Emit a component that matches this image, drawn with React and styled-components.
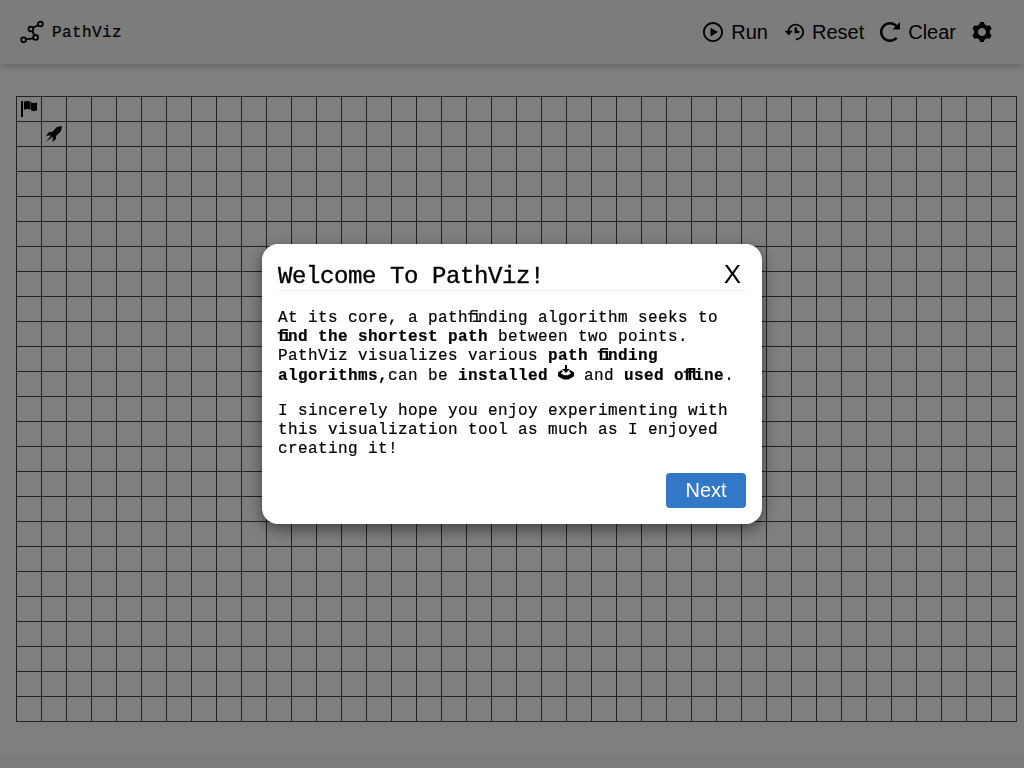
import React from 'react';
import styled, { createGlobalStyle } from 'styled-components';
import {
  ImCog, ImFlag, ImHistory, ImPlay2, ImRocket, ImSpinner11,
} from 'react-icons/im';

const GlobalStyle = createGlobalStyle`
  *, *::before, *::after { box-sizing: border-box; }
  body {
    margin: 0;
    background: #fff;
    color: #000;
    font: 16px/19px "Liberation Mono", monospace;
    letter-spacing: 0.4px;
    overflow: hidden;
  }
`;

const Page = styled.div`
  display: flex;
  flex-direction: column;
  height: 768px;
`;

const Header = styled.header`
  display: flex;
  align-items: center;
  justify-content: space-between;
  height: 64px;
  flex: none;
  padding: 0 32px 0 20px;
  background: #f8f8f8;
  box-shadow: 0 4px 6px -1px rgba(0, 0, 0, 0.2);
`;

const Brand = styled.div`
  display: flex;
  align-items: center;
  gap: 8px;
`;

const BrandName = styled.span`
  padding-top: 3px;
  -webkit-text-stroke: 0.2px #000;
`;

const Toolbar = styled.nav`
  display: flex;
  align-items: center;
`;

const ToolButton = styled.button`
  display: flex;
  align-items: center;
  gap: 8px;
  margin: 0 0 0 ${({ $before }) => $before || 0}px;
  padding: 0;
  border: 0;
  background: none;
  color: #000;
  font: 20px/24px "Liberation Sans", sans-serif;
`;

const Main = styled.main`
  flex: 1;
  padding: 32px 0 0 16px;
`;

const Board = styled.div`
  display: grid;
  grid-template-columns: repeat(40, 25px);
  grid-auto-rows: 25px;
  width: 1001px;
  border-top: 1px solid #444;
  border-left: 1px solid #444;
`;

const Cell = styled.div`
  display: flex;
  align-items: center;
  justify-content: center;
  border-right: 1px solid #444;
  border-bottom: 1px solid #444;
`;

const Footer = styled.footer`
  height: 14px;
  background: #f8f8f8;
`;

const Overlay = styled.div`
  position: fixed;
  inset: 0;
  display: flex;
  align-items: center;
  justify-content: center;
  background: rgba(0, 0, 0, 0.5);
`;

const Dialog = styled.section`
  display: flex;
  flex-direction: column;
  width: 500px;
  height: 280px;
  padding: 16px;
  border-radius: 16px;
  background: #fff;
  box-shadow: 0 5px 15px rgba(0, 0, 0, 0.5);
`;

const DialogHeader = styled.div`
  display: flex;
  align-items: center;
  justify-content: space-between;
  height: 31px;
  flex: none;
  border-bottom: 1px solid #f3f3f3;
`;

const Title = styled.h1`
  margin: 0;
  padding-top: 3px;
  font-size: 24px;
  line-height: 30px;
  font-weight: 400;
  letter-spacing: -0.4px;
  -webkit-text-stroke: 0.35px #000;
`;

const Close = styled.button`
  padding: 0 5px 2px 0;
  border: 0;
  background: none;
  color: #000;
  font: 26px/28px "Liberation Sans", sans-serif;
`;

const Copy = styled.p`
  margin: ${({ $top }) => $top}px 0 0;
  line-height: 19.2px;
  white-space: nowrap;
  -webkit-text-stroke: 0.2px #000;
`;

/* Fits a run of letters into a single 10px character cell. */
const Ligature = styled.span`
  display: inline-block;
  width: 10px;
  line-height: 1;
  letter-spacing: ${({ $tight }) => $tight}px;
  text-indent: -1px;
`;

const Next = styled.button`
  align-self: flex-end;
  width: 80px;
  height: 35px;
  margin-top: auto;
  padding: 0;
  border: 0;
  border-radius: 4px;
  background: #3178c6;
  color: #fff;
  font: 20px/35px "Liberation Sans", sans-serif;
`;

const InlineIcon = styled.svg`
  margin-top: -3px;
  vertical-align: -1px;
`;

const PathIcon = () => (
  <svg width="24" height="24" viewBox="0 0 24 24" fill="none" stroke="#000" strokeWidth="1.8">
    <circle cx="20.4" cy="4" r="2.4" />
    <circle cx="10.9" cy="9" r="2.4" />
    <circle cx="15.6" cy="17.4" r="2.4" />
    <circle cx="3.6" cy="19.8" r="2.4" />
    <path d="M13 7.8 18.2 5.1M12.1 11l2.4 4.3M6 19.4l7.2-1.1" />
  </svg>
);

const InstallIcon = () => (
  <InlineIcon width="16" height="16" viewBox="0 0 16 16">
    <path d="M7 0h2v4h3L8 8 4 4h3z" />
    <path fillRule="evenodd" d="M3.6 5 0 7.6v3.6L5.5 14.5h5l5.5-3.3V7.6L12.4 5 11 6.5l2.2 1.8L10 10.3H6L2.8 8.3 5 6.5z" />
  </InlineIcon>
);

const cells = Array.from({ length: 40 * 25 }, (_, i) => i);

export default function App() {
  return (
    <>
      <GlobalStyle />
      <Page>
        <Header>
          <Brand><PathIcon /><BrandName>PathViz</BrandName></Brand>
          <Toolbar>
            <ToolButton><ImPlay2 size={20} />Run</ToolButton>
            <ToolButton $before={16}><ImHistory size={20} />Reset</ToolButton>
            <ToolButton $before={16}><ImSpinner11 size={20} />Clear</ToolButton>
            <ToolButton $before={16} aria-label="Settings"><ImCog size={20} /></ToolButton>
          </Toolbar>
        </Header>
        <Main>
          <Board>
            {cells.map((i) => (
              <Cell key={i}>
                {i === 0 && <ImFlag size={16} />}
                {i === 41 && <ImRocket size={16} />}
              </Cell>
            ))}
          </Board>
        </Main>
        <Footer />
      </Page>
      <Overlay>
        <Dialog role="dialog">
          <DialogHeader>
            <Title>Welcome To PathViz!</Title>
            <Close>X</Close>
          </DialogHeader>
          <Copy $top={18}>
            At its core, a path<Ligature $tight={-5}>fi</Ligature>nding algorithm seeks to<br />
            <b><Ligature $tight={-5}>fi</Ligature>nd the shortest path</b> between two points.<br />
            PathViz visualizes various <b>path <Ligature $tight={-5}>fi</Ligature>nding<br />
            algorithms,</b>can be <b>installed</b> <InstallIcon /> and <b>used o<Ligature $tight={-6.6}>ffl</Ligature>ine</b>.
          </Copy>
          <Copy $top={16}>
            I sincerely hope you enjoy experimenting with<br />
            this visualization tool as much as I enjoyed<br />
            creating it!
          </Copy>
          <Next>Next</Next>
        </Dialog>
      </Overlay>
    </>
  );
}
